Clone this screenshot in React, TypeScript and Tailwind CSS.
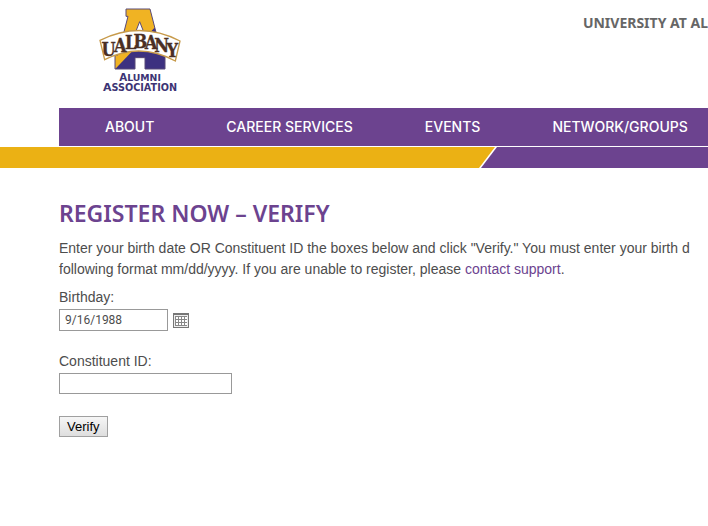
import { FunctionComponent, useState } from 'react';

const navItems = ['About', 'Career Services', 'Events', 'Network/Groups'];

const Logo: FunctionComponent = () => (
  <svg viewBox="0 0 300 285" className="h-[95px] w-[100px]" role="img" aria-label="UAlbany Alumni Association">
    <defs>
      <clipPath id="letterA">
        <path d="M108 12 H180 L215 148 H225 V192 H165 V158 H135 V192 H75 V150 H84 L114 34 H108 Z" />
      </clipPath>
    </defs>
    <g clipPath="url(#letterA)">
      <rect x="70" y="8" width="160" height="190" fill="#f0b323" />
      <path d="M230 30 L70 198 H230 Z" fill="#3d3180" />
    </g>
    <path
      d="M108 12 H180 L215 148 H225 V192 H165 V158 H135 V192 H75 V150 H84 L114 34 H108 Z"
      fill="none"
      stroke="#584a78"
      strokeWidth="3"
    />
    <path d="M149 50 L138 78 H160 Z" fill="#fff" stroke="#584a78" strokeWidth="3" />
    <path
      d="M30 106 Q150 46 270 108 L256 168 Q150 110 44 164 Z"
      fill="#fff"
      stroke="#c79a4a"
      strokeWidth="4"
    />
    <g
      fill="#4b2f24"
      stroke="#4b2f24"
      strokeWidth="1"
      fontFamily="'DejaVu Serif Condensed', 'DejaVu Serif', serif"
      fontWeight="700"
      textAnchor="middle"
    >
      <text x="56 91 122 151 183 215 247" y="153 140 132 128 131 140 155" fontSize="54">
        UALBANY
      </text>
    </g>
    <g fill="#3d3474" fontFamily="'DejaVu Sans', sans-serif" fontWeight="700" textAnchor="middle">
      <text x="150" y="228" fontSize="31">
        A<tspan fontSize="28">LUMNI</tspan>
      </text>
      <text x="150" y="259" fontSize="33">
        A<tspan fontSize="29">SSOCIATION</tspan>
      </text>
    </g>
  </svg>
);

const CalendarIcon: FunctionComponent = () => (
  <svg viewBox="0 0 16 15" className="h-[15px] w-4" shapeRendering="crispEdges" aria-hidden="true">
    <path d="M0 0h16v15H0z" fill="#777" />
    <path d="M1 2h14v12H1z" fill="#eee" />
    <path d="M2 3h12v10H2z" fill="#888" />
    {[4, 7, 10].map((y) => [3, 6, 9, 12].map((x) => <rect key={`${x}-${y}`} x={x} y={y} width="2" height="2" fill="#fff" />))}
  </svg>
);

const Header: FunctionComponent = () => (
  <header>
    <div className="ml-[59px] flex h-[108px] items-start justify-between">
      <a href="#" className="ml-[31px] mt-[5px] shrink-0">
        <Logo />
      </a>
      <a href="#" className="mt-[13px] whitespace-nowrap font-['Noto_Sans',sans-serif] text-sm font-bold uppercase text-[#666]">
        University at Al
      </a>
    </div>
    <nav className="ml-[59px] flex h-[38px] items-center gap-[72px] whitespace-nowrap bg-[#6c438f] pb-px pl-[46px] font-['Inter',sans-serif] text-sm font-medium uppercase text-white">
      {navItems.map((item) => (
        <a key={item} href="#">
          {item}
        </a>
      ))}
    </nav>
    <svg viewBox="0 0 708 21" preserveAspectRatio="none" className="mt-px block h-[21px] w-full" aria-hidden="true">
      <path d="M0 0H495L479 21H0Z" fill="#ebb114" />
      <path d="M497 0H708V21H481Z" fill="#6c438f" />
    </svg>
  </header>
);

const VerifyForm: FunctionComponent = () => {
  const [birthday, setBirthday] = useState('9/16/1988');
  const [constituentId, setConstituentId] = useState('');

  return (
    <form onSubmit={(e) => e.preventDefault()} className="flex flex-col items-start">
      <label htmlFor="birthday" className="mt-[7px] leading-[21px]">
        Birthday:
      </label>
      <div className="mt-px flex items-center gap-[5px]">
        <input
          id="birthday"
          value={birthday}
          onChange={(e) => setBirthday(e.target.value)}
          className="h-[22px] w-[109px] border border-[#999] px-[5px] font-['Roboto',sans-serif] text-xs"
        />
        <button type="button" aria-label="Open the calendar">
          <CalendarIcon />
        </button>
      </div>
      <label htmlFor="constituent-id" className="mt-5 leading-[21px]">
        Constituent ID:
      </label>
      <input
        id="constituent-id"
        value={constituentId}
        onChange={(e) => setConstituentId(e.target.value)}
        className="mt-px h-[21px] w-[173px] border border-[#999] px-[5px] font-['Roboto',sans-serif] text-xs"
      />
      <button
        type="submit"
        className="mt-[22px] h-[21px] border border-[#a0a0a0] bg-linear-to-b from-[#f6f6f6] to-[#dedede] px-[7px] text-[13px] leading-[19px] text-black"
      >
        Verify
      </button>
    </form>
  );
};

export default function App() {
  return (
    <div className="min-h-screen overflow-x-hidden bg-white font-['Liberation_Sans',sans-serif] text-sm text-[#4d4d4d]">
      <Header />
      <main className="ml-[59px] pt-[31px]">
        <h1 className="font-['Noto_Sans',sans-serif] text-[23px] font-semibold uppercase leading-7 text-[#6c438f]">
          Register Now – Verify
        </h1>
        <p className="mt-[11px] whitespace-nowrap leading-[21px]">
          Enter your birth date OR Constituent ID the boxes below and click "Verify." You must enter your birth d
          <br />
          following format mm/dd/yyyy. If you are unable to register, please{' '}
          <a href="#" className="text-[#6c438f]">
            contact support
          </a>
          .
        </p>
        <VerifyForm />
      </main>
    </div>
  );
}
